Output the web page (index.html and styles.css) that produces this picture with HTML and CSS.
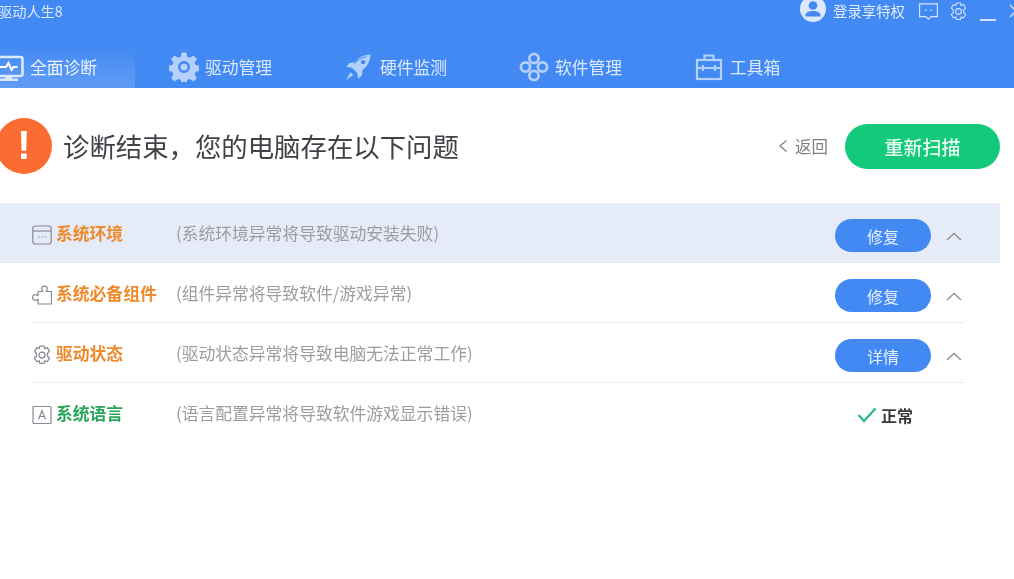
FILE: index.html
```html
<!DOCTYPE html>
<html lang="zh-CN">
<head>
<meta charset="utf-8">
<title>驱动人生8</title>
<link rel="stylesheet" href="styles.css">
</head>
<body>
<header class="header">
  <div class="topbar">
    <div class="app-title">驱动人生8</div>
    <div class="top-actions">
      <svg class="avatar" viewBox="0 0 26 26"><circle cx="13" cy="13" r="13" fill="#dbe8fd"/><circle cx="13" cy="9.500" r="4.300" fill="#4289f3"/><path d="M5.500 19.500c0-3 3-4.500 7.500-4.500s7.500 1.500 7.500 4.500v1h-15z" fill="#4289f3"/></svg>
      <span class="login">登录享特权</span>
      <svg class="ticon feedback" viewBox="1 2.500 18 15.500" fill="none" stroke="#d5e5fd" stroke-width="1.200"><path d="M1.500 3h17v12h-6l-2.500 2.500-2.500-2.500h-6z"/><circle cx="7.500" cy="9" r=".8" fill="#d5e5fd" stroke="none"/><circle cx="12.500" cy="9" r=".8" fill="#d5e5fd" stroke="none"/></svg>
      <svg class="ticon settings" viewBox="2 .5 16 18.500" fill="none" stroke="#d5e5fd" stroke-width="1.100"><path d="M8 1.500h4l.6 2.400 2.300-.9 2 3.400-1.800 1.700v2.800l1.800 1.700-2 3.400-2.300-.9-.6 2.400H8l-.6-2.400-2.300.9-2-3.400 1.800-1.700V8.100L3.100 6.400l2-3.400 2.300.9z" stroke-linejoin="round"/><circle cx="10" cy="9.800" r="2.800"/></svg>
      <span class="min-btn"></span>
      <svg class="close-btn" viewBox="0 0 14 14" fill="none" stroke="#d5e5fd" stroke-width="1.300"><path d="M1 1l12 12M13 1L1 13"/></svg>
    </div>
  </div>
  <nav class="nav">
    <div class="tab active">
      <svg class="tab-icon" viewBox="0 0 30 28"><path d="M2 4h24.500a2 2 0 0 1 2 2v15a2 2 0 0 1-2 2H2z" fill="none" stroke="#dbe9fe" stroke-width="2.600"/><path d="M6 14h6l2.500-4 3 7 2-3h4" fill="none" stroke="#fff" stroke-width="2"/><rect x="11" y="23" width="7" height="3" fill="#dbe9fe"/><rect x="5" y="25.500" width="19" height="2.500" fill="#dbe9fe"/></svg>
      <span>全面诊断</span>
    </div>
    <div class="tab">
      <svg class="tab-icon" viewBox="0 0 30 30"><path fill="#b4d1fb" fill-rule="evenodd" d="M12.500 1h5l.8 4.200 2.700 1.100 3.500-2.400 3.500 3.500-2.400 3.500 1.100 2.700 4.200.8v5l-4.200.8-1.100 2.700 2.400 3.500-3.500 3.500-3.500-2.400-2.700 1.100-.8 4.200h-5l-.8-4.200-2.700-1.100-3.500 2.400-3.500-3.500 2.400-3.500-1.100-2.700-4.200-.8v-5l4.200-.8 1.100-2.700-2.400-3.500 3.500-3.500 3.500 2.400 2.700-1.100zM15 9.500a6 6 0 1 0 0 12 6 6 0 0 0 0-12z" transform="translate(0 -.5)"/><circle cx="15" cy="15" r="3.500" fill="#b4d1fb"/></svg>
      <span>驱动管理</span>
    </div>
    <div class="tab">
      <svg class="tab-icon" viewBox="0 0 30 30"><path fill="#b4d1fb" d="M28.500 1.500c-7.500.3-13 3-16.500 8.500l-6 .8-3.500 4.200 6 .7 5.800 5.800.7 6 4.200-3.500.8-6c5.200-3.800 8-9.500 8.500-16.500z"/><path d="M11 12c2.500-4 7-7 13-8" fill="none" stroke="#4289f3" stroke-width="1"/><circle cx="20.500" cy="9.800" r="2.300" fill="#4289f3"/><path fill="#b4d1fb" d="M7 20.500l3 3L2 29z"/></svg>
      <span>硬件监测</span>
    </div>
    <div class="tab">
      <svg class="tab-icon" viewBox="0 0 30 30" fill="none" stroke="#b4d1fb" stroke-width="2.800"><circle cx="15" cy="6.500" r="4.600"/><circle cx="15" cy="23.500" r="4.600"/><circle cx="6.500" cy="15" r="4.600"/><circle cx="23.500" cy="15" r="4.600"/></svg>
      <span>软件管理</span>
    </div>
    <div class="tab">
      <svg class="tab-icon" viewBox="0 0 30 30" fill="none" stroke="#b4d1fb" stroke-width="2.200"><rect x="3" y="8" width="24" height="19"/><path d="M10.500 8V3.500h9V8M3 16h24M9 13v6M21 13v6"/></svg>
      <span>工具箱</span>
    </div>
  </nav>
</header>
<main>
  <section class="summary">
    <div class="alert-icon">!</div>
    <h1 class="headline">诊断结束，您的电脑存在以下问题</h1>
    <a class="back"><svg class="back-arrow" viewBox="0 0 10 14" fill="none" stroke="#8a8a8a" stroke-width="1.500"><path d="M8.500 1.500L2 7l6.500 5.500"/></svg>返回</a>
    <button class="rescan">重新扫描</button>
  </section>
  <section class="list">
    <div class="row highlighted">
      <div class="row-inner">
        <svg class="row-icon" viewBox="0 0 20 20" fill="none" stroke="#868c95" stroke-width="1.200"><rect x=".8" y="1" width="18.400" height="18" rx="2.500"/><path d="M1 6h18"/><path d="M6 12h1.500M9.300 12h1.500M12.600 12h1.500"/></svg>
        <span class="name warn">系统环境</span>
        <span class="desc">(系统环境异常将导致驱动安装失败)</span>
        <button class="action">修复</button>
        <svg class="chevron" viewBox="0 0 16 9" fill="none" stroke="#8a8f96" stroke-width="1.300"><path d="M1 8l7-6.500L15 8"/></svg>
      </div>
    </div>
    <div class="row">
      <div class="row-inner lined">
        <svg class="row-icon" viewBox="0 0 20 20" fill="none" stroke="#868c95" stroke-width="1.200"><path d="M6 6.500H10.800C10 5.500 9.700 4.800 9.700 4a2.800 2.800 0 0 1 5.600 0C15.300 4.800 15 5.500 14.200 6.500H19.500V19H6V14.200C5 15 4.300 15.300 3.500 15.300a2.800 2.800 0 0 1 0-5.600C4.300 9.700 5 10 6 10.800Z" stroke-linejoin="round"/></svg>
        <span class="name warn">系统必备组件</span>
        <span class="desc">(组件异常将导致软件/游戏异常)</span>
        <button class="action">修复</button>
        <svg class="chevron" viewBox="0 0 16 9" fill="none" stroke="#8a8f96" stroke-width="1.300"><path d="M1 8l7-6.500L15 8"/></svg>
      </div>
    </div>
    <div class="row">
      <div class="row-inner lined">
        <svg class="row-icon" viewBox="1.500 .5 17 18.500" fill="none" stroke="#868c95" stroke-width="1.200"><path d="M8 1.500h4l.6 2.400 2.300-.9 2 3.400-1.800 1.700v2.800l1.800 1.700-2 3.400-2.300-.9-.6 2.400H8l-.6-2.400-2.300.9-2-3.400 1.800-1.700V8.100L3.100 6.400l2-3.400 2.300.9z" stroke-linejoin="round"/><circle cx="10" cy="9.800" r="2.800"/></svg>
        <span class="name warn">驱动状态</span>
        <span class="desc">(驱动状态异常将导致电脑无法正常工作)</span>
        <button class="action">详情</button>
        <svg class="chevron" viewBox="0 0 16 9" fill="none" stroke="#8a8f96" stroke-width="1.300"><path d="M1 8l7-6.500L15 8"/></svg>
      </div>
    </div>
    <div class="row">
      <div class="row-inner">
        <svg class="row-icon" viewBox="0 0 20 20" fill="none" stroke="#868c95" stroke-width="1.200"><rect x="1" y="1.500" width="18" height="17" rx="1"/><path d="M6.500 14.500L10 5.500l3.500 9M7.800 11.500h4.400"/></svg>
        <span class="name ok">系统语言</span>
        <span class="desc">(语言配置异常将导致软件游戏显示错误)</span>
        <span class="status"><svg class="check" viewBox="0 0 20 16" fill="none" stroke="#2fbb85" stroke-width="2.400"><path d="M1.500 8l5.500 6L18.500 1.500"/></svg>正常</span>
      </div>
    </div>
  </section>
</main>
</body>
</html>
```
FILE: styles.css
```css
* { box-sizing: border-box; }
html, body { margin: 0; height: 100%; overflow: hidden; background: #fff; }
body { font-family: "Noto Sans CJK SC", "Noto Sans", sans-serif; color: #444; }
.header, main { filter: blur(.35px); }

.header { height: 88px; background: #4289f3; display: flex; flex-direction: column; }
.topbar { height: 44px; display: flex; justify-content: space-between; align-items: flex-start; }
.app-title { margin: 0 0 0 -2px; font-size: 14.200px; line-height: 22px; color: #dce9fd; }
.top-actions { display: flex; align-items: flex-start; margin-right: -9px; }
.avatar { width: 26px; height: 26px; margin: -4px 7px 0 0; flex: none; }
.login { font-size: 14.400px; line-height: 22px; color: #e2edfe; margin-right: 14px; }
.ticon { width: 19px; height: 19px; margin-top: 2px; flex: none; }
.feedback { margin-right: 11px; }
.settings { margin-right: 12px; }
.min-btn { width: 16px; height: 1.500px; margin-top: 19px; background: #d5e5fd; margin-right: 13px; }
.close-btn { width: 14px; height: 14px; margin-top: 4px; flex: none; }

.nav { flex: 1; display: flex; margin-left: -40px; }
.tab { width: 175px; display: flex; align-items: center; padding: 2px 0 0 34px; gap: 6px; font-size: 16.800px; color: #dce9fd; }
.tab.active { color: #eef5ff; background: linear-gradient(to bottom, rgba(255,255,255,0), rgba(255,255,255,.16)); }
.tab-icon { width: 30px; height: 30px; flex: none; }
.tab:nth-child(3) .tab-icon { width: 28px; height: 28px; margin-right: 2px; }

.summary { height: 115px; display: flex; align-items: center; padding-right: 14px; }
.alert-icon { width: 56px; height: 56px; margin-left: -4px; border-radius: 50%; background: #fb6b32; color: #fff; font: 700 40px/54px "Liberation Sans", sans-serif; text-align: center; flex: none; }
.headline { margin: 0 0 0 11px; font-size: 26.400px; line-height: 40px; font-weight: 400; color: #3f4348; flex: 1; }
.back { display: flex; align-items: center; gap: 7px; font-size: 16.500px; color: #7d7f83; margin-right: 17px; }
.back-arrow { width: 10px; height: 14px; }
.rescan { width: 155px; height: 45px; margin-top: 2px; border: 0; border-radius: 23px; background: #14c97a; color: #e8fff3; font: 500 19px "Noto Sans CJK SC", sans-serif; }

.list { width: 1000px; }
.row { height: 60px; padding: 0 35px 0 30px; }
.row.highlighted { background: #e6ebf8; }
.row-inner { height: 100%; display: flex; align-items: center; }
.row-inner.lined { box-shadow: inset 0 -1px 0 #ebedf0; }
.row-icon { width: 20px; height: 20px; margin: 4px 4px 0 2px; flex: none; }
.name { width: 120px; font-size: 16.800px; line-height: 22px; font-weight: 700; margin-top: -1px; flex: none; }
.name.warn { color: #ee8a2c; }
.name.ok { color: #2aa65c; }
.desc { flex: 1; font-size: 16.800px; line-height: 22px; color: #9a9da1; margin-top: 0; }
.action { width: 96px; height: 33px; border: 0; border-radius: 17px; background: #4289f3; color: #e6f0ff; font: 400 16px "Noto Sans CJK SC", sans-serif; margin-top: 5px; }
.chevron { width: 16px; height: 9px; margin: 6px 3px 0 15px; flex: none; }
.status { width: 130px; display: flex; align-items: center; padding-left: 22px; font-size: 16px; font-weight: 700; color: #3a3a3a; margin-top: 3px; }
.check { width: 20px; height: 16px; margin-right: 4px; }
```
